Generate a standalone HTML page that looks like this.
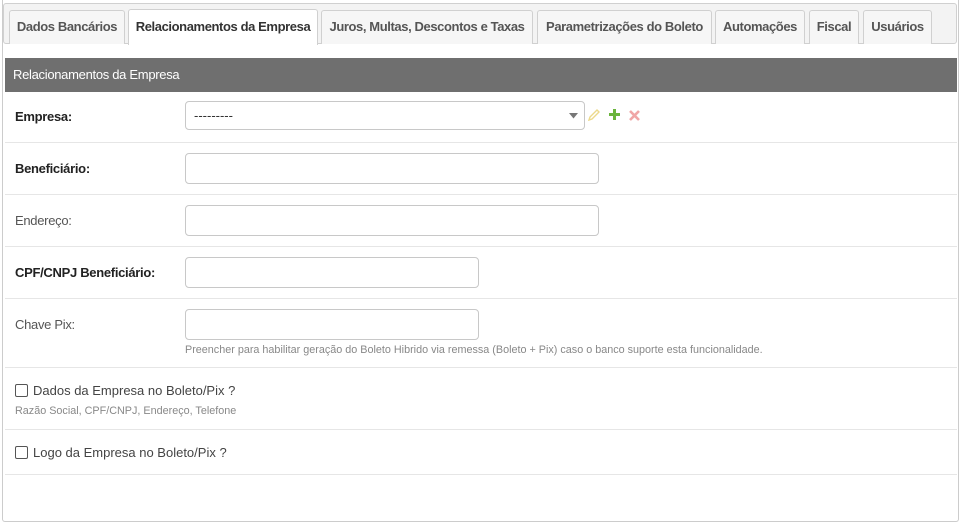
<!DOCTYPE html>
<html><head><meta charset="utf-8"><style>
*{box-sizing:border-box;margin:0;padding:0}
body{width:960px;height:528px;background:#fff;font-family:"Liberation Sans",Arial,sans-serif;position:relative;overflow:hidden;color:#333}
.outer{position:absolute;left:2px;top:0;width:957px;height:522px;border:1px solid #ccc;border-top:none;border-radius:0 0 3px 3px}
.tabbar{position:absolute;left:3px;top:3px;width:954px;height:41px;background:#f3f3f3;border:1px solid #d0d0d0;border-radius:3px}
.tab{position:absolute;top:10px;height:34px;background:#f6f6f6;border:1px solid #d0d0d0;border-bottom:none;border-radius:3px 3px 0 0;font-size:13px;font-weight:bold;color:#555;text-align:center;line-height:32px;letter-spacing:-0.4px;white-space:nowrap}
.tab.act{background:#fff;top:9px;height:36px;color:#333;line-height:34px}
.hdr{position:absolute;left:5px;top:58px;width:952px;height:34px;background:#6f6f6f;color:#fff;font-size:13px;line-height:34px;padding-left:8px;letter-spacing:-0.3px}
.sep{position:absolute;left:5px;width:952px;height:1px;background:#e6e6e6}
.lbl{position:absolute;left:15px;font-size:13px;letter-spacing:-0.3px}
.b{font-weight:bold;color:#222}
.n{color:#555}
.inp{position:absolute;left:185px;border:1px solid #c8c8c8;border-radius:4px;background:#fff}
.help{position:absolute;font-size:10.8px;color:#888;white-space:nowrap}
.cb{position:absolute;left:15px;width:13px;height:13px;border:1px solid #555;border-radius:2px;background:#fff}
.cbt{position:absolute;left:33px;font-size:13px;color:#444}
</style></head><body>
<div class="outer"></div>
<div class="tabbar"></div>
<div class="tab" style="left:9px;width:116px">Dados Bancários</div>
<div class="tab act" style="left:128px;width:190px">Relacionamentos da Empresa</div>
<div class="tab" style="left:321px;width:212px">Juros, Multas, Descontos e Taxas</div>
<div class="tab" style="left:537px;width:175px">Parametrizações do Boleto</div>
<div class="tab" style="left:715px;width:90px">Automações</div>
<div class="tab" style="left:809px;width:50px">Fiscal</div>
<div class="tab" style="left:863px;width:69px">Usuários</div>
<div class="hdr">Relacionamentos da Empresa</div>

<div class="lbl b" style="top:109px">Empresa:</div>
<div class="inp" style="top:101px;width:400px;height:29px;font-size:13px;line-height:27px;padding-left:8px;color:#333">---------
<svg style="position:absolute;right:6px;top:11px" width="9" height="6"><path d="M0 0H9L4.5 5.5Z" fill="#777"/></svg></div>
<svg style="position:absolute;left:588px;top:109px" width="12" height="12"><path d="M1 11L2 8L9 1L11 3L4 10Z" fill="none" stroke="#ecd98a" stroke-width="1.4"/></svg>
<svg style="position:absolute;left:609px;top:109px" width="11" height="11"><path d="M4 0h3v4h4v3H7v4H4V7H0V4h4z" fill="#6ab43c"/></svg>
<svg style="position:absolute;left:629px;top:110px" width="11" height="11"><path d="M1 1L10 10M10 1L1 10" stroke="#f0a6a6" stroke-width="2.6"/></svg>
<div class="sep" style="top:142px"></div>
<div class="lbl b" style="top:161px">Beneficiário:</div>
<div class="inp" style="top:153px;width:414px;height:31px"></div>
<div class="sep" style="top:194px"></div>
<div class="lbl n" style="top:213px">Endereço:</div>
<div class="inp" style="top:205px;width:414px;height:31px"></div>
<div class="sep" style="top:246px"></div>
<div class="lbl b" style="top:265px">CPF/CNPJ Beneficiário:</div>
<div class="inp" style="top:257px;width:294px;height:31px"></div>
<div class="sep" style="top:298px"></div>
<div class="lbl n" style="top:317px">Chave Pix:</div>
<div class="inp" style="top:309px;width:294px;height:31px"></div>
<div class="help" style="left:185px;top:344px">Preencher para habilitar geração do Boleto Hibrido via remessa (Boleto + Pix) caso o banco suporte esta funcionalidade.</div>
<div class="sep" style="top:367px"></div>
<div class="cb" style="top:384px"></div>
<div class="cbt" style="top:383px">Dados da Empresa no Boleto/Pix ?</div>
<div class="help" style="left:15px;top:405px">Razão Social, CPF/CNPJ, Endereço, Telefone</div>
<div class="sep" style="top:429px"></div>
<div class="cb" style="top:446px"></div>
<div class="cbt" style="top:445px">Logo da Empresa no Boleto/Pix ?</div>
<div class="sep" style="top:474px"></div>
</body></html>
